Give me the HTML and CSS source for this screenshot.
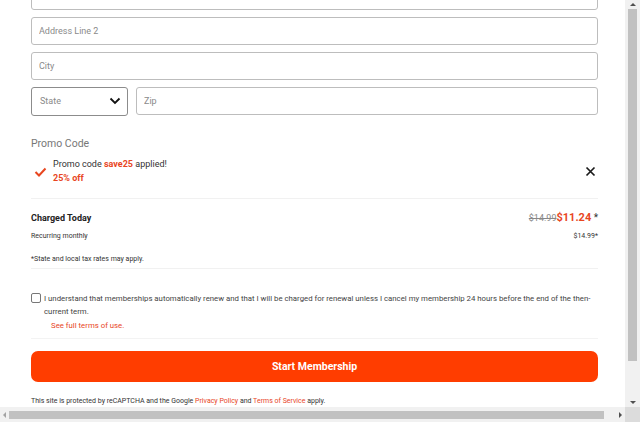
FILE: index.html
```html
<!DOCTYPE html>
<html lang="en">
<head>
    <meta charset="UTF-8">
    <meta name="viewport" content="width=device-width, initial-scale=1.0">
    <title>Checkout</title>
    <link rel="stylesheet" href="styles.css">
</head>
<body>
    <div class="window">
        <div class="viewport">
            <div class="page">
                <div class="field"><input type="text" placeholder="Address Line 1"></div>
                <div class="field"><input type="text" placeholder="Address Line 2"></div>
                <div class="field"><input type="text" placeholder="City"></div>
                <div class="field-row">
                    <div class="select">
                        <span>State</span>
                        <svg width="12" height="8" viewBox="0 0 12 8"><polyline points="1.5,1.5 6,6 10.5,1.5" fill="none" stroke="#111" stroke-width="1.8"/></svg>
                    </div>
                    <div class="field zip"><input type="text" placeholder="Zip"></div>
                </div>

                <div class="promo">
                    <h3>Promo Code</h3>
                    <div class="promo-applied">
                        <svg class="check" width="13" height="10" viewBox="0 0 13 10"><polyline points="1.5,5 5,8.5 11.5,1.5" fill="none" stroke="#e8461f" stroke-width="2"/></svg>
                        <div class="promo-text">
                            <p>Promo code <b>save25</b> applied!</p>
                            <p class="off">25% off</p>
                        </div>
                        <svg class="remove" width="11" height="11" viewBox="0 0 11 11"><path d="M1.5 1.5 L9.5 9.5 M9.5 1.5 L1.5 9.5" stroke="#1a1a1a" stroke-width="1.7"/></svg>
                    </div>
                </div>

                <div class="summary">
                    <div class="line">
                        <span class="label">Charged Today</span>
                        <span class="price"><s>$14.99</s><b>$11.24</b> *</span>
                    </div>
                    <div class="line small">
                        <span>Recurring monthly</span>
                        <span>$14.99*</span>
                    </div>
                    <p class="note">*State and local tax rates may apply.</p>
                </div>

                <div class="terms">
                    <label class="agree">
                        <span class="box"></span>
                        <span>I understand that memberships automatically renew and that I will be charged for renewal unless I cancel my membership 24 hours before the end of the then-current term.</span>
                    </label>
                    <a class="link" href="#">See full terms of use.</a>
                </div>

                <button class="start">Start Membership</button>

                <p class="captcha">This site is protected by reCAPTCHA and the Google <a href="#">Privacy Policy</a> and <a href="#">Terms of Service</a> apply.</p>
            </div>
        </div>
        <div class="vscroll">
            <span class="arrow up"></span>
            <div class="thumb"></div>
            <span class="arrow down"></span>
        </div>
        <div class="hscroll">
            <span class="arrow left"></span>
            <div class="thumb"></div>
            <span class="arrow right"></span>
        </div>
        <div class="corner"></div>
    </div>
</body>
</html>
```

FILE: styles.css
```css
body {
    margin: 0;
    font-family: Roboto, 'Liberation Sans', sans-serif;
    color: #333;
    background: #fff;
    overflow: hidden;
}
.window {
    display: grid;
    grid-template-columns: 625px 15px;
    grid-template-rows: 407px 15px;
    width: 640px;
    height: 422px;
}
.viewport { overflow: hidden; }
.page {
    width: 567px;
    padding-left: 31px;
    margin-top: -18px;
}

/* inputs */
.field { margin-bottom: 7px; }
.field input {
    box-sizing: border-box;
    width: 100%;
    height: 28px;
    border: 1px solid #bdbdbd;
    border-radius: 3px;
    padding: 0 7px;
    font-family: inherit;
    font-size: 9px;
    color: #333;
    outline: none;
}
.field input::placeholder { color: #8a8a8a; }
.field-row { display: flex; gap: 8px; align-items: flex-start; }
.field-row .zip { flex: 1; }
.select {
    box-sizing: border-box;
    width: 97px;
    height: 29px;
    border: 1px solid #8c8c8c;
    border-radius: 3px;
    display: flex;
    align-items: center;
    justify-content: space-between;
    padding: 0 6px 1px 8px;
    font-size: 9px;
    color: #8a8a8a;
}

/* promo */
.promo h3 {
    margin: 15px 0 0;
    font-size: 10.5px;
    font-weight: 400;
    color: #777;
}
.promo-applied {
    display: flex;
    align-items: center;
    padding: 7px 2px 13px 3px;
    border-bottom: 1px solid #f1f1f1;
}
.check { margin-right: 6px; margin-top: 2px; }
.promo-text { flex: 1; font-size: 9px; color: #333; }
.promo-text p { margin: 0; line-height: 14px; }
.promo-text b, .off { color: #e8461f; font-weight: 700; }

/* summary */
.summary {
    padding-top: 12px;
    border-bottom: 1px solid #f1f1f1;
}
.line { display: flex; justify-content: space-between; align-items: baseline; }
.label { font-size: 9px; font-weight: 700; color: #222; }
.price { font-size: 10px; color: #333; }
.price s { font-size: 9px; color: #888; }
.price b { font-size: 11px; color: #e8461f; }
.line.small { font-size: 7px; color: #333; margin-top: 8px; }
.note { margin: 15px 0 0; padding-bottom: 5px; font-size: 7px; color: #333; }

/* terms */
.terms {
    padding: 23px 0 8px;
    border-bottom: 1px solid #f3f3f3;
}
.agree {
    display: flex;
    gap: 3px;
    font-size: 7.8px;
    line-height: 13px;
    color: #444;
}
.box {
    flex: none;
    box-sizing: border-box;
    width: 10px;
    height: 10px;
    margin-top: 1px;
    border: 1px solid #777;
    border-radius: 2px;
}
.link {
    display: block;
    margin: 3px 0 0 20px;
    font-size: 7.8px;
    color: #e8461f;
    text-decoration: none;
}

.start {
    display: block;
    width: 100%;
    height: 31px;
    margin-top: 12px;
    border: none;
    border-radius: 7px;
    background: #ff3d00;
    color: #fff;
    font-family: inherit;
    font-size: 10.5px;
    font-weight: 700;
}
.captcha { margin: 15px 0 0; font-size: 7px; color: #333; }
.captcha a { color: #e8461f; text-decoration: none; }

/* fake browser scrollbars */
.vscroll, .hscroll {
    background: #f1f1f1;
    display: flex;
    align-items: center;
    justify-content: space-between;
}
.vscroll { flex-direction: column; padding: 3px 0; box-sizing: border-box; }
.hscroll { padding: 0 3px; }
.vscroll .thumb { width: 9px; flex: none; height: 352px; margin-bottom: auto; margin-top: 3px; background: #c1c1c1; }
.hscroll .thumb { height: 8px; flex: none; width: 595px; margin-right: auto; margin-left: 3px; background: #c1c1c1; }
.corner { background: #dcdcdc; }
.arrow { width: 0; height: 0; border: 3px solid transparent; }
.arrow.up { border-bottom-color: #505050; border-top-width: 0; }
.arrow.down { border-top-color: #505050; border-bottom-width: 0; }
.arrow.left { border-right-color: #a3a3a3; border-left-width: 0; }
.arrow.right { border-left-color: #505050; border-right-width: 0; }
```
